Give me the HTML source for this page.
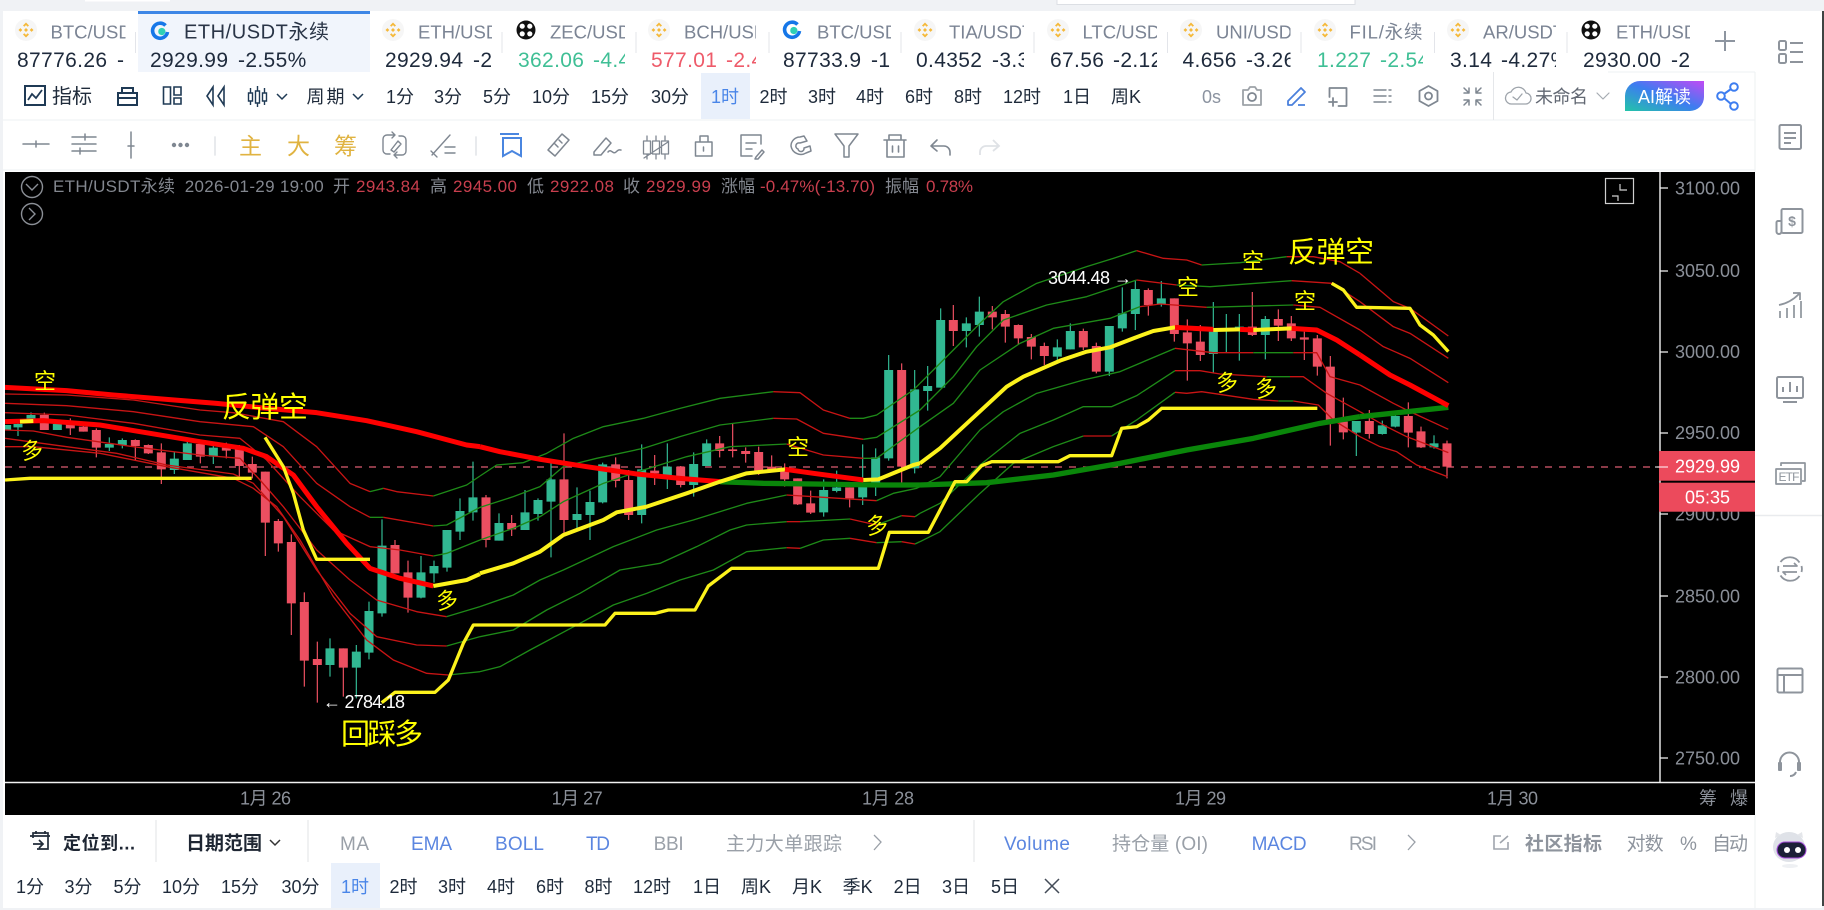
<!DOCTYPE html>
<html lang="zh-CN"><head><meta charset="utf-8"><title>ETH/USDT永续</title>
<style>
html,body{margin:0;padding:0;background:#f0f2f5;width:1824px;height:910px;overflow:hidden}
svg{display:block}
text{font-family:"Liberation Sans","Noto Sans CJK SC",sans-serif}
.nm{font-size:18.5px;fill:#7b8494}
.pr{font-size:21px;fill:#1e2a3c;letter-spacing:.35px}
.gr{fill:#3fbf95}.rd{fill:#ee5b6a}
.tb{font-size:18px;fill:#1e2a3a}
.lg{font-size:17px;fill:#83878f}
.lr{font-size:17px;fill:#c93f4e}
.ax{font-size:18px;fill:#8b9099}
.y{fill:#ffff00}
.ic{fill:none;stroke:#7f8791;stroke-width:1.8;stroke-linejoin:round;stroke-linecap:round}
.bl{font-size:19px;fill:#5b86e0}
.gy{font-size:19px;fill:#9aa0a8}
polyline{fill:none;stroke-linejoin:round;stroke-linecap:butt}
.tr{stroke:#c81414;stroke-width:4}
.tg{stroke:#1e8a18;stroke-width:4}
.kr{stroke:#ff0000;stroke-width:15}
.kg{stroke:#0a860a;stroke-width:16}
.ky{stroke:#fcf21c;stroke-width:12}
.sy{stroke:#fcf21c;stroke-width:10}
.wr{fill:none;stroke:#ec4f61;stroke-width:3.6}
.wg{fill:none;stroke:#31b892;stroke-width:3.6}
.br{fill:none;stroke:#ec4f61;stroke-width:27}
.bg{fill:none;stroke:#31b892;stroke-width:27}
</style></head><body>
<svg xmlns="http://www.w3.org/2000/svg" width="1824" height="910" viewBox="0 0 1824 910">
<defs>
<g id="bn"><circle r="11" fill="#f6f6f6"/><path fill="#f5b93a" d="M0-7.500 3-4.500 1.700-3.200 0-4.900-1.700-3.200-3-4.500ZM0 7.500 3 4.500 1.700 3.200 0 4.900-1.700 3.200-3 4.500ZM-7.500 0-5.600-1.900-3.700 0-5.600 1.900ZM7.500 0 5.600-1.900 3.700 0 5.600 1.900ZM0-2 2 0 0 2-2 0Z"/></g>
<g id="bk"><circle r="9.500" fill="#111"/><circle cx="-3.800" cy="-3.800" r="2.600" fill="#fff"/><circle cx="3.800" cy="-3.800" r="2.600" fill="#fff"/><circle cx="-3.800" cy="3.800" r="2.600" fill="#fff"/><circle cx="3.800" cy="3.800" r="2.600" fill="#fff"/></g>
<g id="cb"><path d="M5.500-5.500A7.500 7.500 0 1 0 7.500 1" fill="none" stroke="#1677e8" stroke-width="3.600"/><path d="M1-3a3.600 3.600 0 1 1 0 7 3.600 3.600 0 0 1 0-7z" fill="#2fd0b5"/></g>
<linearGradient id="ai" x1="0" y1="1" x2="1" y2="0"><stop offset="0" stop-color="#23c4a8"/><stop offset=".5" stop-color="#3d7df0"/><stop offset="1" stop-color="#c24af5"/></linearGradient>
<clipPath id="ct"><rect x="5" y="172" width="1655" height="610"/></clipPath>
<clipPath id="c1"><rect x="0" y="14" width="125.500" height="58"/></clipPath>
<clipPath id="c3"><rect x="372" y="14" width="120" height="58"/></clipPath>
<clipPath id="c4"><rect x="505" y="14" width="120" height="58"/></clipPath>
<clipPath id="c5"><rect x="640" y="14" width="116" height="58"/></clipPath>
<clipPath id="c6"><rect x="772" y="14" width="119" height="58"/></clipPath>
<clipPath id="c7"><rect x="905" y="14" width="119" height="58"/></clipPath>
<clipPath id="c8"><rect x="1038" y="14" width="119" height="58"/></clipPath>
<clipPath id="c9"><rect x="1170" y="14" width="120.500" height="58"/></clipPath>
<clipPath id="c10"><rect x="1305" y="14" width="118" height="58"/></clipPath>
<clipPath id="c11"><rect x="1438" y="14" width="118" height="58"/></clipPath>
<clipPath id="c12"><rect x="1570" y="14" width="120" height="58"/></clipPath>
</defs>

<!-- page frame -->
<rect width="1824" height="910" fill="#f0f2f5"/>
<rect x="85" y="0" width="85" height="1.500" fill="#fff"/>
<rect x="1057" y="-1" width="298" height="5.500" fill="#fff" stroke="#dcdfe4"/>
<rect x="3" y="11" width="1819" height="897" fill="#fff"/>
<rect x="1822" y="11" width="2" height="895" fill="#3f4443"/>
<path d="M1755 72V172M1755 815V908" stroke="#eef0f2" fill="none"/>
<path d="M3 120H1755" stroke="#eef0f3"/>
<path d="M3 170H1755" stroke="#eef0f3"/>
<path d="M1608 72H1755" stroke="#eef0f3"/>

<!-- tabs -->
<rect x="138" y="11" width="232" height="61" fill="#f1f5fc"/>
<rect x="138" y="11" width="232" height="3" fill="#3d86e6"/>
<path d="M135.500 32V53M502 32V53M636 32V53M769 32V53M901 32V53M1034 32V53M1167.500 32V53M1301 32V53M1434.500 32V53M1567 32V53" stroke="#e3e5ea"/>
<g clip-path="url(#c1)"><use href="#bn" x="26" y="30"/><text class="nm" x="50.500" y="38.500">BTC/USDT</text><text class="pr" x="17" y="67">87776.26<tspan x="117">-</tspan></text></g>
<use href="#cb" x="160" y="31"/><text x="184" y="38.500" font-size="20" fill="#2a3547" textLength="145">ETH/USDT永续</text>
<text class="pr" x="150" y="67">2929.99<tspan x="238">-2.55%</tspan></text>
<g clip-path="url(#c3)"><use href="#bn" x="393" y="30"/><text class="nm" x="418" y="38.500">ETH/USDT</text><text class="pr" x="385" y="67">2929.94<tspan x="473">-2.55%</tspan></text></g>
<g clip-path="url(#c4)"><use href="#bk" x="526" y="30"/><text class="nm" x="550" y="38.500">ZEC/USDT</text><text class="pr gr" x="518" y="67">362.06<tspan x="593">-4.4%</tspan></text></g>
<g clip-path="url(#c5)"><use href="#bn" x="659" y="30"/><text class="nm" x="684" y="38.500">BCH/USDT</text><text class="pr rd" x="651" y="67">577.01<tspan x="726">-2.4%</tspan></text></g>
<g clip-path="url(#c6)"><use href="#cb" x="792" y="30"/><text class="nm" x="817" y="38.500">BTC/USDT</text><text class="pr" x="783" y="67">87733.9<tspan x="871">-1.9%</tspan></text></g>
<g clip-path="url(#c7)"><use href="#bn" x="925" y="30"/><text class="nm" x="949" y="38.500">TIA/USDT</text><text class="pr" x="916" y="67">0.4352<tspan x="992">-3.3%</tspan></text></g>
<g clip-path="url(#c8)"><use href="#bn" x="1058" y="30"/><text class="nm" x="1082.500" y="38.500">LTC/USDT</text><text class="pr" x="1050" y="67">67.56<tspan x="1113">-2.12%</tspan></text></g>
<g clip-path="url(#c9)"><use href="#bn" x="1191" y="30"/><text class="nm" x="1216" y="38.500">UNI/USDT</text><text class="pr" x="1182.500" y="67">4.656<tspan x="1246">-3.26%</tspan></text></g>
<g clip-path="url(#c10)"><use href="#bn" x="1325" y="30"/><text class="nm" x="1349.500" y="38.500" textLength="73">FIL/永续</text><text class="pr gr" x="1317" y="67">1.227<tspan x="1380">-2.54%</tspan></text></g>
<g clip-path="url(#c11)"><use href="#bn" x="1458" y="30"/><text class="nm" x="1483" y="38.500">AR/USDT</text><text class="pr" x="1450" y="67">3.14<tspan x="1501">-4.27%</tspan></text></g>
<g clip-path="url(#c12)"><use href="#bk" x="1591" y="30"/><text class="nm" x="1616" y="38.500">ETH/USDT</text><text class="pr" x="1583" y="67">2930.00<tspan x="1671">-2.55%</tspan></text></g>
<path d="M1715 41H1735M1725 31V51" stroke="#8d95a0" stroke-width="2" fill="none"/>

<!-- toolbar 1 -->
<rect x="701" y="73" width="49" height="46" fill="#e9f0fb"/>
<g fill="none" stroke="#1f3a55" stroke-width="2">
<rect x="25" y="86" width="20" height="19"/><path d="M28 100l4-6 4 4 6-8" stroke-width="1.800"/>
<path d="M118 93h19v12h-19zM122 93v-5h11v5M118 98h19"/>
<path d="M163.500 87h7v17h-7zM174 87h7v8h-7zM174 98h7v6h-7z" stroke-width="1.600"/>
<path d="M213 87l-6 9 6 9zM224 87l-6 9 6 9z" stroke-width="1.600"/>
<path d="M250.500 88v5M250.500 101v4M257.500 86v5M257.500 103v4M264.500 88v5M264.500 101v4" stroke-width="1.400"/>
<path d="M248.500 93h4v8h-4zM255.500 91h4v12h-4zM262.500 93h4v8h-4z" stroke-width="1.400"/>
<path d="M277 94l5 5 5-5M353 94l5 5 5-5" stroke-width="1.500"/>
</g>
<text x="52" y="103" font-size="20" fill="#1e2a3a">指标</text>
<text class="tb" x="306.500" y="103" textLength="38">周期</text>
<text class="tb" x="386" y="103">1分</text><text class="tb" x="434" y="103">3分</text><text class="tb" x="483" y="103">5分</text>
<text class="tb" x="532" y="103">10分</text><text class="tb" x="591" y="103">15分</text><text class="tb" x="651" y="103">30分</text>
<text class="tb" x="711" y="103" style="fill:#4a86e8">1时</text><text class="tb" x="759.500" y="103">2时</text><text class="tb" x="808" y="103">3时</text>
<text class="tb" x="856" y="103">4时</text><text class="tb" x="905" y="103">6时</text><text class="tb" x="954" y="103">8时</text>
<text class="tb" x="1003" y="103">12时</text><text class="tb" x="1063" y="103">1日</text><text class="tb" x="1111" y="103">周K</text>
<text class="tb" x="1202" y="103" style="fill:#8b93a0">0s</text>
<g class="ic">
<path d="M1243 90h5l2-3h5l2 3h4v15h-18z" stroke="#9da2a8"/><circle cx="1252" cy="97" r="4"/>
<path d="M1329.500 97v-9h17v18h-8M1329 102h8M1333 98v8"/>
<path d="M1374 90h12M1374 96h12M1374 102h12M1389 90h2M1389 96h2M1389 102h2" stroke-width="1.400"/>
<path d="M1428.500 86l9 5v10l-9 5-9-5V91z"/><circle cx="1428.500" cy="96" r="3.500"/>
<path d="M1464 88l5 5M1469 88v5h-5M1481 88l-5 5M1476 88v5h5M1464 105l5-5M1469 105v-5h-5M1481 105l-5-5M1476 105v-5h5" stroke-width="1.500"/>
<path d="M1512 104a6 6 0 0 1-1-12 8 8 0 0 1 15 1 5.500 5.500 0 0 1-1 11zM1513 97l4 3 5-6" stroke-width="1.300" stroke="#9ea4ab"/>
<path d="M1597 93l6 6 6-6" stroke-width="1.200" stroke="#a6abb2"/>
</g>
<path d="M1288 101l13-13 4 4-13 13h-4zM1298 105h7" fill="none" stroke="#4a80dc" stroke-width="1.800" stroke-linejoin="round"/>
<path d="M1493.500 72V120" stroke="#e5e7ea"/>
<text x="1535" y="103" font-size="18" fill="#626873" textLength="53">未命名</text>
<path d="M1640 81H1704V97a14 14 0 0 1-14 14H1625V96a15 15 0 0 1 15-15z" fill="url(#ai)"/>
<text x="1638" y="103" font-size="18" fill="#fff" textLength="53">AI解读</text>
<g fill="none" stroke="#3d7df0" stroke-width="2"><circle cx="1721" cy="96" r="3.800"/><circle cx="1734" cy="87" r="3.800"/><circle cx="1734" cy="106" r="3.800"/><path d="M1724 94l7-5M1724 98l7 6"/></g>

<!-- toolbar 2 -->
<g class="ic">
<path d="M23 144h26M36 141v6" stroke-width="1.500"/>
<path d="M72 137h24M72 144h24M72 151h24M85 134v6M80 148v6" stroke-width="1.500"/>
<path d="M131 132v26M128 146h6" stroke-width="1.500"/>
<path d="M215 137v18M476 137v18" stroke="#e6e8eb"/>
<path d="M395 135h-8a4 4 0 0 0-4 4v11a4 4 0 0 0 4 4h3M392 132l3 3-3 3M394 155h8a4 4 0 0 0 4-4v-11a4 4 0 0 0-4-4h-3M397 152l-3 3 3 3M391 150l7-9 3 3-7 8z" stroke-width="1.400"/>
<path d="M432 155l18-20M431 151l6 6M445 147h10M445 153h10" stroke-width="1.400"/>
<path d="M548 150l14-16 7 6-14 16zM555 144l3 3M559 140l3 3" stroke-width="1.500"/>
<path d="M594 152l12-14 5 5-10 12h-7zM608 152c3-4 5 3 8 0s3-2 5-2" stroke-width="1.500"/>
<path d="M647 136v5M647 154v5M656 136v5M656 154v5M665 136v5M665 154v5M643.500 141h7v13h-7zM652.500 141h7v13h-7zM661.500 141h7v13h-7zM644 158l24-16" stroke-width="1.300"/>
<path d="M695.500 142h16.500v14h-16.500zM700 142v-6h8v6M703.500 147v4" stroke-width="1.500"/>
<path d="M761 144V135H741v21h11M746 143h10M746 149h6M756 157l6-7 2 2-6 7h-3z" stroke-width="1.500"/>
<path d="M791 146a9 9 0 0 1 9-9l4-1 3 5-7 2a3 3 0 0 0-2 6 3 3 0 0 0 6-1l6-2 1 5-5 2a10 10 0 0 1-15-7z" stroke-width="1.500"/>
<path d="M835 134h23l-9 12v11h-5v-11z" stroke-width="1.500"/>
<path d="M884 140h22M889 140v-5h12v5M887 140v17h17v-17M892.500 146v6M898.500 146v6" stroke-width="1.600"/>
<path d="M937 140l-6 6 6 5M931 146h13a6 6 0 0 1 6 6v3" stroke-width="1.600"/>
</g>
<circle cx="174" cy="145" r="2.200" fill="#7f8791"/><circle cx="180.500" cy="145" r="2.200" fill="#7f8791"/><circle cx="187" cy="145" r="2.200" fill="#7f8791"/>
<path d="M993 140l6 6-6 5M999 146h-13a6 6 0 0 0-6 6v3" fill="none" stroke="#dfe2e6" stroke-width="1.800"/>
<text x="239" y="154" font-size="23" fill="#e0b341">主</text><text x="287" y="154" font-size="23" fill="#e0b341">大</text><text x="334" y="154" font-size="23" fill="#e0b341">筹</text>
<path d="M500 134h19M503 138v18l9-5 9 5v-18z" fill="none" stroke="#4a86e0" stroke-width="2"/>

<!-- chart -->
<rect x="5" y="172" width="1750" height="643" fill="#000"/>
<g clip-path="url(#ct)">
<path d="M5 467H1662" stroke="#dc5c72" stroke-width="1.200" stroke-dasharray="7 7" fill="none"/>

<!-- candles -->
<g transform="translate(0,350) scale(.33333)">
<path class="wr" d="M133 188V240M211 205V255M250 225V245M289 235V322M406 268V332M445 283V312M484 280V402M601 275V340M679 278V325M718 285V380M757 320V385M796 365V618M835 507V605M874 553V855M913 727V1010M952 875V1058M1030 895V1040M1185 570V670M1224 632V788M1458 435V592"/>
<path class="br" d="M133 195V240M211 218V235M250 230V245M289 240V293M406 270V288M445 285V310M484 307V358M601 282V320M679 293V302M718 297V348M757 342V368M796 365V518M835 513V580M874 576V760M913 756V932M952 927V945M1030 895V953M1185 585V670M1224 667V743M1458 442V570"/>
<path class="wg" d="M20 225V240M54 218V258M93 187V212M172 222V240M328 262V303M367 265V295M523 306V372M562 268V330M640 288V342M990 865V980M1069 885V1045M1107 755V928M1146 508V800M1263 618V745M1302 632V698M1341 540V665M1380 445V570M1419 335V512"/>
<path class="bg" d="M20 225V240M54 222V232M93 195V210M172 222V240M328 282V293M367 270V285M523 326V360M562 280V330M640 293V320M990 895V945M1069 905V953M1107 783V908M1146 587V790M1263 667V743M1302 648V670M1341 540V653M1380 483V545M1419 442V487"/>
</g>
<g transform="translate(480,350) scale(.33333)">
<path class="wg" d="M57 490V572M135 420V540M174 445V512M213 338V622M291 412V538M330 422V570M368 338V460M485 283V520M562 280V417M641 307V440M680 268V348M1031 388V500M1070 362V427M1148 283V465M1187 295V438M1226 15V332M1304 60V370M1343 48V182"/>
<path class="bg" d="M57 519V572M135 487V540M174 450V492M213 388V455M291 492V510M330 456V495M368 343V457M485 358V495M562 350V375M641 342V405M680 280V348M1031 420V487M1070 412V423M1148 410V442M1187 322V412M1226 60V325M1304 118V355M1343 108V123"/>
<path class="wr" d="M95 495V558M252 250V552M407 322V412M446 360V510M524 315V405M602 348V412M719 258V322M758 222V322M797 292V338M836 290V375M875 316V360M914 340V410M953 385V465M992 422V492M1109 412V472M1265 40V402"/>
<path class="br" d="M95 519V538M252 388V510M407 343V393M446 390V495M524 362V370M602 350V405M719 280V303M758 298V303M797 303V312M836 306V362M875 350V358M914 360V388M953 385V463M992 460V488M1109 412V445M1265 60V350"/>
</g>
<g transform="translate(920,230) scale(.33333)">
<path class="wg" d="M62 235V473M139 262V352M178 200V320M412 328V392M451 280V358M568 288V438M607 172V305M646 150V300M724 153V230M880 216V428M919 252V368M958 252V392M1036 258V388M1309 573V678M1387 572V614M1426 545V592"/>
<path class="bg" d="M62 270V473M139 280V303M178 245V285M412 352V380M451 303V358M568 288V425M607 250V295M646 177V252M724 205V222M880 305V372M919 295V300M958 290V300M1036 267V315M1309 573V608M1387 586V612M1426 558V590"/>
<path class="wr" d="M100 225V348M217 228V298M256 240V338M295 283V345M334 312V388M373 338V405M490 296V360M529 338V430M685 175V257M763 205V335M802 268V452M841 285V393M997 186V318M1075 238V333M1114 258V333M1153 305V390M1192 315V437M1231 378V647M1270 503V628M1348 540V626M1465 517V652"/>
<path class="br" d="M100 270V303M217 245V262M256 252V290M295 285V325M334 321V350M373 348V378M490 303V352M529 348V425M685 180V225M763 205V312M802 307V340M841 335V375M997 290V315M1075 267V287M1114 280V325M1153 322V329M1192 325V410M1231 410V575M1270 575V607M1348 573V612M1465 558V608"/>
</g>
<g transform="translate(1360,230) scale(.33333)">
<path class="wr" d="M183 590V654M261 632V745"/>
<path class="br" d="M183 604V652M261 640V710"/>
<path class="wg" d="M222 616V656"/>
<path class="bg" d="M222 640V652"/>
</g>

<!-- bands & thick lines -->
<g transform="translate(0,350) scale(.33333)">
<polyline class="tr" points="15,132 200,135 400,150 600,180 700,188 850,215 950,290 1050,400 1110,425"/><polyline class="tg" points="1110,425 1150,415"/><polyline class="tr" points="1150,415 1190,425 1300,438"/><polyline class="tg" points="1300,438 1400,405 1440,378"/>
<polyline class="tr" points="15,160 200,167 400,185 600,215 760,230 850,290 950,400 1050,470 1110,502"/><polyline class="tg" points="1110,502 1150,502"/><polyline class="tr" points="1150,502 1300,528"/><polyline class="tg" points="1300,528 1340,525 1440,472"/>
<polyline class="tr" points="15,188 200,195 400,220 600,255 720,265 800,330 900,440 1000,540 1110,590 1200,600 1300,618"/><polyline class="tg" points="1300,618 1340,610 1440,570"/>
<polyline class="tr" points="15,240 100,243 200,262 400,290 600,315 720,325 780,390 850,470 950,600 1050,690 1130,750 1250,785 1340,800"/><polyline class="tg" points="1340,800 1440,770"/>
<polyline class="tr" points="15,265 200,290 350,310 500,345 700,372 760,400 850,500 950,660 1050,790 1130,860 1250,885 1340,888"/><polyline class="tg" points="1340,888 1440,860"/>
<polyline class="tr" points="15,290 100,290 300,310 500,350 700,385 760,415 830,470 900,570 1000,740 1100,870 1180,930 1280,970 1345,975"/><polyline class="tg" points="1345,975 1440,965"/>
<polyline class="kr" points="15,112 200,122 340,135 500,148 650,160 800,175 950,188 1100,212 1250,245 1400,285 1440,290"/>
<polyline class="kr" points="15,215 130,212 300,225 450,250 600,275 730,295 800,320 880,375 950,470 1040,580 1110,655 1200,685 1300,708"/>
<polyline class="ky" points="60,215 100,213"/>
<polyline class="ky" points="1300,708 1400,690 1440,672"/>
<polyline class="sy" points="15,390 90,385 755,385"/>
<polyline class="sy" points="795,262 850,350 880,430 910,540 950,628 1110,628"/>
<polyline class="sy" points="1145,1058 1185,1027 1305,1027 1345,990 1390,880 1420,825 1440,825"/>
</g>
<g transform="translate(480,350) scale(.33333)">
<polyline class="tg" points="0,378 50,345 130,338 200,310 280,265 370,230 490,205 600,175 720,145 880,125"/><polyline class="tr" points="880,125 960,128 1030,180 1110,205"/><polyline class="tg" points="1110,205 1150,205 1190,195 1300,120 1320,100"/>
<polyline class="tg" points="0,472 100,440 180,410 250,350 350,325 490,295 600,260 720,225 880,205"/><polyline class="tr" points="880,205 950,207 1030,250 1150,268"/><polyline class="tg" points="1150,268 1190,262 1320,180"/>
<polyline class="tg" points="0,570 100,535 180,500 250,455 370,400 490,360 620,320 750,290 920,282"/><polyline class="tr" points="920,282 1030,315 1150,325"/><polyline class="tg" points="1150,325 1190,325 1320,230"/>
<polyline class="tg" points="0,770 100,735 180,690 250,660 400,590 530,540 640,510 800,460 920,435"/><polyline class="tr" points="920,435 1000,440 1190,452"/><polyline class="tg" points="1190,452 1240,430 1310,415 1320,410"/>
<polyline class="tg" points="0,860 100,840 200,780 300,730 420,660 540,640 650,590 750,540 800,525 920,515"/><polyline class="tr" points="920,515 960,515"/><polyline class="tg" points="960,515 1110,507"/><polyline class="tr" points="1110,507 1190,525"/><polyline class="tg" points="1190,525 1265,497"/><polyline class="tr" points="1265,497 1305,500"/><polyline class="tg" points="1305,500 1320,490"/>
<polyline class="tg" points="0,965 60,950 150,900 300,820 400,765 500,730 600,690 700,660 800,605 920,593"/><polyline class="tr" points="920,593 960,595"/><polyline class="tg" points="960,595 1030,570 1110,565"/><polyline class="tr" points="1110,565 1190,578"/><polyline class="tg" points="1190,578 1265,575"/><polyline class="tr" points="1265,575 1305,582"/><polyline class="tg" points="1305,582 1320,575"/>
<polyline class="kr" points="0,290 60,305 180,328 320,350 470,372 600,385 720,395"/>
<polyline class="kg" points="720,395 850,400 1000,402 1200,405 1320,405"/>
<polyline class="ky" points="0,670 100,640 180,605 250,555 370,510 410,487 500,470 620,430 720,395 800,370 915,358"/>
<polyline class="kr" points="915,358 1000,370 1150,390"/>
<polyline class="ky" points="1150,390 1195,388 1300,345 1320,340"/>
<polyline class="sy" points="0,825 375,825 405,790 525,790 565,780 645,780 685,708 755,655 1195,655 1228,547 1320,547"/>
</g>
<g transform="translate(920,230) scale(.33333)">
<polyline class="tg" points="0,460 100,360 180,280 250,215 350,160 500,110 580,85 650,62"/><polyline class="tr" points="650,62 730,85 800,90 845,105"/><polyline class="tg" points="845,105 960,98 1100,80"/><polyline class="tr" points="1100,80 1180,80 1260,95 1320,130"/>
<polyline class="tg" points="0,540 100,440 170,350 250,270 380,225 500,200 650,150"/><polyline class="tr" points="650,150 770,165"/><polyline class="tg" points="770,165 870,170 1115,152"/><polyline class="tr" points="1115,152 1235,160 1320,215"/>
<polyline class="tg" points="0,590 100,520 180,420 300,340 400,295 570,265 660,230"/><polyline class="tr" points="660,230 720,222 860,232"/><polyline class="tg" points="860,232 1120,225"/><polyline class="tr" points="1120,225 1200,232 1320,300"/>
<polyline class="tg" points="0,770 60,740 180,600 250,545 350,490 490,450 600,425 765,355"/><polyline class="tr" points="765,355 880,368 1000,368"/><polyline class="tg" points="1000,368 1120,368"/><polyline class="tr" points="1120,368 1190,368 1230,440 1320,465"/>
<polyline class="tg" points="0,850 60,820 180,705 300,610 400,570 490,530 575,530 650,497 765,422"/><polyline class="tr" points="765,422 840,422 900,432 1040,440"/><polyline class="tg" points="1040,440 1110,440"/><polyline class="tr" points="1110,440 1150,440 1220,490 1320,545"/>
<polyline class="tg" points="0,935 60,905 180,790 280,700 400,650 490,618"/><polyline class="tr" points="490,618 575,618"/><polyline class="tg" points="575,618 650,570 765,487"/><polyline class="tr" points="765,487 800,490 845,485 1000,508 1075,513"/><polyline class="tg" points="1075,513 1120,513"/><polyline class="tr" points="1120,513 1195,525 1240,570 1320,620"/>
<polyline class="kg" points="0,765 200,758 400,735 600,700 800,660 1000,625 1200,580 1320,560"/>
<polyline class="ky" points="0,700 60,655 130,590 260,470 310,440 420,392 500,365 570,352 640,325 700,303 765,292"/>
<polyline class="kr" points="765,292 880,298"/><polyline class="ky" points="880,300 960,298"/><polyline class="kr" points="960,298 1000,300"/><polyline class="ky" points="1000,300 1115,295"/>
<polyline class="kr" points="1115,295 1190,300 1250,330 1320,375"/>
<polyline class="sy" points="0,907 25,907 105,755 140,755 185,707 215,695 415,695 450,677 575,677 605,595 650,590 685,570 725,535 1192,535"/>
<polyline class="sy" points="1235,160 1270,180 1310,232 1320,232"/>
</g>
<g transform="translate(1360,230) scale(.33333)">
<polyline class="tr" points="0,130 100,215 150,235 265,318"/>
<polyline class="tr" points="0,215 100,290 150,310 265,385"/>
<polyline class="tr" points="0,300 70,350 150,385 265,458"/>
<polyline class="tr" points="0,465 100,520 150,545 265,598"/>
<polyline class="tr" points="0,545 80,590 140,620 265,668"/>
<polyline class="tr" points="0,620 60,650 110,665 170,705 262,740"/>
<polyline class="kg" points="0,560 265,532"/>
<polyline class="kr" points="0,375 90,435 150,465 265,527"/>
<polyline class="sy" points="0,232 150,235 180,285 220,315 265,365"/>
</g>

<!-- annotations -->
<g class="y">
<text x="34" y="389" font-size="22">空</text>
<text x="21" y="458" font-size="22" transform="rotate(-8 32 450)">多</text>
<text x="222" y="417" font-size="29" textLength="86">反弹空</text>
<text x="341" y="744" font-size="29" textLength="82">回踩多</text>
<text x="436" y="608" font-size="22" transform="rotate(-8 447 600)">多</text>
<text x="787" y="455" font-size="22">空</text>
<text x="866" y="533" font-size="22" transform="rotate(-8 877 525)">多</text>
<text x="1177" y="295" font-size="22">空</text>
<text x="1242" y="269" font-size="22">空</text>
<text x="1288" y="262" font-size="29" textLength="86">反弹空</text>
<text x="1294" y="309" font-size="22">空</text>
<text x="1216" y="390" font-size="22" transform="rotate(-8 1227 382)">多</text>
<text x="1255" y="396" font-size="22" transform="rotate(-8 1266 388)">多</text>
</g>
<text x="323" y="708" font-size="18" fill="#fff" textLength="82">← 2784.18</text>
<text x="1048" y="284" font-size="18" fill="#fff" textLength="84">3044.48 →</text>
</g>

<!-- legend -->
<g fill="none" stroke="#8b8f96" stroke-width="1.400"><circle cx="32" cy="187" r="10.500"/><path d="M26 184l6 6 6-6"/><circle cx="32" cy="214" r="10.500"/><path d="M29 208l6 6-6 6"/></g>
<text class="lg" x="53" y="192" textLength="122">ETH/USDT永续</text>
<text class="lg" x="184.700" y="192" textLength="139">2026-01-29 19:00</text>
<text class="lg" x="333" y="192">开</text><text class="lr" x="356" y="192" textLength="64">2943.84</text>
<text class="lg" x="430" y="192">高</text><text class="lr" x="453" y="192" textLength="64">2945.00</text>
<text class="lg" x="527" y="192">低</text><text class="lr" x="550" y="192" textLength="64">2922.08</text>
<text class="lg" x="623" y="192">收</text><text class="lr" x="646" y="192" textLength="65">2929.99</text>
<text class="lg" x="721" y="192">涨幅</text><text class="lr" x="760" y="192" textLength="115">-0.47%(-13.70)</text>
<text class="lg" x="885" y="192">振幅</text><text class="lr" x="926" y="192" textLength="47">0.78%</text>
<g fill="none" stroke="#cfcfcf" stroke-width="1.200"><rect x="1605.500" y="178.500" width="28" height="25"/><path d="M1620 184v6h7M1612 196h6v5"/></g>

<!-- price axis -->
<path d="M1660 172V782" stroke="#f2f2f2" stroke-width="1.400"/>
<path d="M1660 188h8M1660 271h8M1660 352h8M1660 433h8M1660 514h8M1660 596h8M1660 677h8M1660 758h8" stroke="#f2f2f2" stroke-width="1.300"/>
<path d="M5 782.500H1755" stroke="#f2f2f2" stroke-width="1.400"/>
<text class="ax" x="1675" y="194.500">3100.00</text>
<text class="ax" x="1675" y="277">3050.00</text>
<text class="ax" x="1675" y="358">3000.00</text>
<text class="ax" x="1675" y="439">2950.00</text>
<text class="ax" x="1675" y="520.500">2900.00</text>
<text class="ax" x="1675" y="602.500">2850.00</text>
<text class="ax" x="1675" y="683.500">2800.00</text>
<text class="ax" x="1675" y="764.500">2750.00</text>
<rect x="1659" y="451" width="96" height="29.700" fill="#ec4a5c"/>
<rect x="1659" y="482.700" width="96" height="29" fill="#ec4a5c"/>
<path d="M1655 467h13" stroke="#fff" stroke-width="1"/>
<text x="1675" y="472.500" font-size="18" fill="#fff">2929.99</text>
<text x="1685" y="503.500" font-size="18" fill="#fff">05:35</text>

<!-- time axis -->
<text class="ax" x="240" y="804.500" textLength="51">1月 26</text>
<text class="ax" x="551.600" y="804.500" textLength="51">1月 27</text>
<text class="ax" x="862" y="804.500" textLength="52">1月 28</text>
<text class="ax" x="1175" y="804.500" textLength="51">1月 29</text>
<text class="ax" x="1487" y="804.500" textLength="51">1月 30</text>
<text class="ax" x="1699" y="804.500">筹</text>
<text class="ax" x="1730" y="804.500">爆</text>

<!-- toolbar 3 -->
<path d="M156 820V862M308 820V862M974 820V862" stroke="#e1e3e6"/>
<path d="M33 838v-5h15v16h-11M33 844h10M39 840l4 4-4 4M36 831v3M45 831v3M30 836h20" fill="none" stroke="#222d3a" stroke-width="1.700"/>
<text x="63" y="849.500" font-size="18" font-weight="bold" fill="#1e2633" textLength="72">定位到...</text>
<text x="186" y="849.500" font-size="19" font-weight="bold" fill="#1e2633" textLength="76">日期范围</text>
<path d="M270 840l5 5 5-5" fill="none" stroke="#333" stroke-width="1.500"/>
<text class="gy" x="340" y="850" textLength="29">MA</text>
<text class="bl" x="411" y="850" textLength="41">EMA</text>
<text class="bl" x="495" y="850" textLength="49">BOLL</text>
<text class="bl" x="586" y="850" textLength="24">TD</text>
<text class="gy" x="653.600" y="850" textLength="30">BBI</text>
<text class="gy" x="726" y="850" textLength="116">主力大单跟踪</text>
<path d="M874 835l7 7-7 8" fill="none" stroke="#9aa0a8" stroke-width="1.300"/>
<text class="bl" x="1004" y="850" textLength="66">Volume</text>
<text class="gy" x="1112" y="850" textLength="96">持仓量 (OI)</text>
<text class="bl" x="1251.600" y="850" textLength="55">MACD</text>
<text class="gy" x="1349" y="850" textLength="28">RSI</text>
<path d="M1408 835l7 7-7 8" fill="none" stroke="#9aa0a8" stroke-width="1.300"/>
<path d="M1501 836h-7v13h14v-7M1500 843l8-7" fill="none" stroke="#a0a5ad" stroke-width="1.600"/>
<text x="1525" y="850" font-size="19" font-weight="bold" fill="#8e949d" textLength="77">社区指标</text>
<text class="gy" x="1626.600" y="850" textLength="37" style="fill:#8e949d">对数</text>
<text class="gy" x="1680" y="850" style="fill:#8e949d">%</text>
<text class="gy" x="1712" y="850" textLength="36" style="fill:#8e949d">自动</text>

<!-- toolbar 4 -->
<rect x="331" y="863" width="49" height="45" fill="#e9f0fb"/>
<text class="tb" x="16" y="893">1分</text><text class="tb" x="64.500" y="893">3分</text><text class="tb" x="113.500" y="893">5分</text>
<text class="tb" x="162" y="893">10分</text><text class="tb" x="221" y="893">15分</text><text class="tb" x="281.500" y="893">30分</text>
<text class="tb" x="341" y="893" style="fill:#4a86e8">1时</text><text class="tb" x="389.500" y="893">2时</text><text class="tb" x="438" y="893">3时</text>
<text class="tb" x="487" y="893">4时</text><text class="tb" x="536" y="893">6时</text><text class="tb" x="584.500" y="893">8时</text>
<text class="tb" x="633" y="893">12时</text><text class="tb" x="693" y="893">1日</text><text class="tb" x="741" y="893">周K</text>
<text class="tb" x="792" y="893">月K</text><text class="tb" x="842.600" y="893">季K</text><text class="tb" x="893.600" y="893">2日</text>
<text class="tb" x="942" y="893">3日</text><text class="tb" x="991" y="893">5日</text>
<path d="M1045 879l14 14M1059 879l-14 14" stroke="#444c58" stroke-width="1.500" fill="none"/>

<!-- sidebar -->
<g fill="none" stroke="#8e949c" stroke-width="2" stroke-linejoin="round">
<rect x="1779" y="41" width="7" height="9" rx="1.500"/><rect x="1779" y="54" width="7" height="9" rx="1.500"/>
<path d="M1790 43h13M1790 52h13M1790 62h13"/>
<rect x="1779.500" y="125" width="21.500" height="24" rx="1.500"/><path d="M1784 133h12M1784 138h12M1784 143h7"/>
<rect x="1781.500" y="209" width="21" height="24" rx="1.500"/><path d="M1781 221h-3a1.500 1.500 0 0 0-1.500 1.500v9a2.500 2.500 0 0 0 5 0"/>
<path d="M1780 318v-7M1787 318v-10M1794 318v-13M1801 318v-17M1779 305q11-2 20-11M1793 293h7v7" stroke-width="1.700"/>
<rect x="1777" y="377" width="26" height="21" rx="1.500"/><path d="M1783 392v-5M1790 392v-10M1797 392v-6M1783 402h14"/>
<path d="M1781 466v-3h24v18h-3M1776 469h25v15h-25z" stroke-width="1.700"/>
<path d="M1799.500 562.500a11.500 11.500 0 0 0-19-.5M1780.500 575.500a11.500 11.500 0 0 0 19 .5M1778.500 572a11.500 11.500 0 0 1 0-6M1801.500 566a11.500 11.500 0 0 1 0 6" stroke-width="1.800"/>
<path d="M1783 566h14l-3-3M1797 572h-14l3 3" stroke-width="1.700"/>
<rect x="1777.500" y="668.500" width="25" height="24" rx="1.500"/><path d="M1778 675h24M1784 675v17"/>
<path d="M1780 765v-3a9.500 9.500 0 0 1 19 0v3M1796 772a6 6 0 0 1-6 4" stroke-width="2"/>
</g>
<rect x="1778" y="762" width="4" height="9" rx="1" fill="#8e949c"/><rect x="1797" y="762" width="4" height="9" rx="1" fill="#8e949c"/>
<text x="1792" y="226" font-size="14" font-weight="bold" fill="#8e949c" text-anchor="middle">$</text>
<text x="1778.500" y="481" font-size="12" fill="#8e949c" textLength="21">ETF</text>
<path d="M1755 515.500H1822" stroke="#e9ebee" stroke-width="1.500"/>
<ellipse cx="1789" cy="847" rx="16" ry="15" fill="#dfe2e8"/>
<path d="M1775 838l1-6 5 3M1803 838l-1-6-5 3" fill="#e4e6ea"/>
<rect x="1777" y="842" width="29" height="16" rx="8" fill="#1c2038" stroke="#a34ad8" stroke-width="1"/>
<circle cx="1787" cy="850" r="3" fill="#fff"/><circle cx="1798" cy="850" r="3" fill="#fff"/>
<ellipse cx="1790" cy="866" rx="8" ry="2" fill="#eef0f3"/>
</svg>
</body></html>
